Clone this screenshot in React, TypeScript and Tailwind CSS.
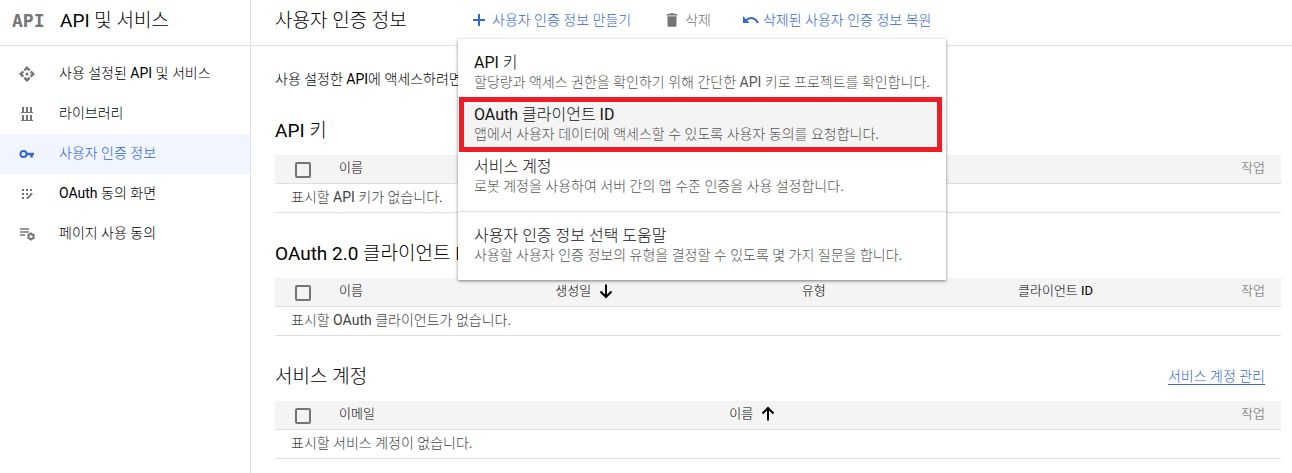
import { useState } from 'react';
import { MdDelete } from 'react-icons/md';
import clsx from 'clsx';

interface IconProps {
  className?: string;
}

function ApiIcon({ className }: IconProps) {
  return (
    <svg viewBox="0 0 16 16" className={className} fill="currentColor">
      <path d="M8 0l3.500 3.500-1.700 1.700L8 3.400 6.200 5.200 4.500 3.500z" />
      <path d="M8 16l3.500-3.500-1.700-1.700L8 12.600l-1.800-1.800-1.700 1.700z" />
      <path d="M0 8l3.500-3.500 1.700 1.700L3.400 8l1.800 1.800-1.700 1.700z" />
      <path d="M16 8l-3.500-3.500-1.700 1.700L12.600 8l-1.800 1.800 1.700 1.700z" />
      <circle cx="8" cy="8" r="1.500" />
    </svg>
  );
}

function LibraryIcon({ className }: IconProps) {
  return (
    <svg viewBox="0 0 16 16" className={className} fill="currentColor" shapeRendering="crispEdges">
      <path d="M3 1h2v5H3zM7 1h2v5H7zM11 1h2v5h-2zM2 6h12v1H2zM3 9h2v5H3zM7 9h2v5H7zM11 9h2v5h-2zM2 14h12v1H2z" />
    </svg>
  );
}

function KeyIcon({ className }: IconProps) {
  return (
    <svg viewBox="0 0 16 16" className={className} fill="none" stroke="currentColor">
      <circle cx="4.500" cy="8" r="3" strokeWidth="2" />
      <path d="M7.500 8H15" strokeWidth="2.500" />
      <path d="M12.500 8v3.500" strokeWidth="2.500" />
    </svg>
  );
}

function ConsentIcon({ className }: IconProps) {
  return (
    <svg viewBox="0 0 16 16" className={className} fill="currentColor">
      <path d="M3 3h2v2H3zM7 3h2v2H7zM11 3h2v2h-2zM3 7h2v2H3zM7 7h2v2H7zM3 11h2v2H3z" />
      <path d="M12.500 6.800l1.300 1.300L8.900 13H7.500v-1.300z" />
    </svg>
  );
}

function AgreementIcon({ className }: IconProps) {
  return (
    <svg viewBox="0 0 16 16" className={className} fill="none" stroke="currentColor">
      <path d="M1 3h9M1 6h9M1 9h5" strokeWidth="1.600" />
      <circle cx="12" cy="10.500" r="2.500" strokeWidth="1.800" />
      <path
        d="M12 6.500v1.500M12 13v1.500M8.500 8.500l1.300.8M14.200 11.700l1.300.8M8.500 12.500l1.300-.8M14.200 9.300l1.300-.8"
        strokeWidth="1.800"
      />
    </svg>
  );
}

function PlusIcon({ className }: IconProps) {
  return (
    <svg viewBox="0 0 18 18" className={className} fill="none" stroke="currentColor" strokeWidth="2">
      <path d="M9 3v12M3 9h12" />
    </svg>
  );
}

function RestoreIcon({ className }: IconProps) {
  return (
    <svg viewBox="0 0 16 16" className={className} fill="none" stroke="currentColor">
      <path d="M0 4v7h6.500z" fill="currentColor" stroke="none" />
      <path d="M3 8.500C7 4.500 12.500 5.500 14.800 11" strokeWidth="2" />
    </svg>
  );
}

function SortIcon({ className }: IconProps) {
  return (
    <svg viewBox="0 0 18 18" className={className} fill="none" stroke="currentColor" strokeWidth="2">
      <path d="M9 2.500v12M3.500 9.500L9 15l5.500-5.500" />
    </svg>
  );
}

const navItems = [
  { label: '사용 설정된 API 및 서비스', icon: ApiIcon },
  { label: '라이브러리', icon: LibraryIcon },
  { label: '사용자 인증 정보', icon: KeyIcon, active: true },
  { label: 'OAuth 동의 화면', icon: ConsentIcon },
  { label: '페이지 사용 동의', icon: AgreementIcon }
];

interface MenuEntry {
  title: string;
  description: string;
  highlighted?: boolean;
}

const credentialTypes: MenuEntry[] = [
  {
    title: 'API 키',
    description: '할당량과 액세스 권한을 확인하기 위해 간단한 API 키로 프로젝트를 확인합니다.'
  },
  {
    title: 'OAuth 클라이언트 ID',
    description: '앱에서 사용자 데이터에 액세스할 수 있도록 사용자 동의를 요청합니다.',
    highlighted: true
  },
  {
    title: '서비스 계정',
    description: '로봇 계정을 사용하여 서버 간의 앱 수준 인증을 사용 설정합니다.'
  }
];

const helpEntry: MenuEntry = {
  title: '사용자 인증 정보 선택 도움말',
  description: '사용할 사용자 인증 정보의 유형을 결정할 수 있도록 몇 가지 질문을 합니다.'
};

function MenuOption({ title, description, highlighted }: MenuEntry) {
  return (
    <button
      role="menuitem"
      className={clsx(
        'relative block w-full px-4 pt-1.5 pb-2 text-left whitespace-nowrap hover:bg-[#f4f4f4]',
        highlighted && 'z-10 bg-[#f4f4f4]'
      )}
    >
      <span className="block text-base leading-5 text-[#111]">{title}</span>
      <span className="block text-sm leading-[18px] text-[#555]">{description}</span>
      {highlighted && (
        <span className="pointer-events-none absolute -top-0.5 right-1 -bottom-px left-px border-5 border-[#ee1c25]" />
      )}
    </button>
  );
}

function CreateMenu() {
  return (
    <div
      role="menu"
      className="absolute top-[39px] left-0 z-20 w-[488px] bg-white shadow-[0_1px_3px_rgba(0,0,0,0.5)]"
    >
      <div className="border-b border-[#e0e0e0] py-2">
        {credentialTypes.map(entry => (
          <MenuOption key={entry.title} {...entry} />
        ))}
      </div>
      <div className="py-2">
        <MenuOption {...helpEntry} />
      </div>
    </div>
  );
}

interface Column {
  label: string;
  width?: string;
  sort?: 'asc' | 'desc';
}

interface CredentialSectionProps {
  title: string;
  columns: Column[];
  emptyText: string;
  link?: string;
}

function CredentialSection({ title, columns, emptyText, link }: CredentialSectionProps) {
  return (
    <section>
      <div className="flex h-[65px] items-center justify-between pt-[18px] pr-4">
        <h2 className="text-[19px]">{title}</h2>
        {link && (
          <a href="#" className="mb-0.5 border-b border-[#3367d6] text-sm leading-4 text-[#3367d6]">
            {link}
          </a>
        )}
      </div>
      <table className="w-full table-fixed border-separate border-spacing-0">
        <thead>
          <tr className="h-[29px] bg-[#f4f4f4] text-left text-[13px] leading-5">
            <th className="w-16 border-b border-[#e0e0e0] p-0 pt-0.5 pl-5">
              <input
                type="checkbox"
                aria-label={`${title} 모두 선택`}
                className="block size-4 appearance-none rounded-xs border-2 border-[#757575] checked:bg-[#757575]"
              />
            </th>
            {columns.map(({ label, width, sort }) => (
              <th key={label} className={clsx('border-b border-[#e0e0e0] p-0 pb-0.5 font-normal', width)}>
                <span className="flex items-center gap-1.5">
                  {label}
                  {sort && <SortIcon className={clsx('size-[18px]', sort === 'asc' && 'rotate-180')} />}
                </span>
              </th>
            ))}
            <th className="w-16 border-b border-[#e0e0e0] p-0 pr-4 pb-0.5 text-right font-normal text-[#616161]">
              작업
            </th>
          </tr>
        </thead>
        <tbody>
          <tr className="h-[29px]">
            <td
              colSpan={columns.length + 2}
              className="border-b border-[#e0e0e0] p-0 pb-0.5 pl-4 text-sm leading-5 text-[#424242]"
            >
              {emptyText}
            </td>
          </tr>
        </tbody>
      </table>
    </section>
  );
}

export default function App() {
  const [menuOpen, setMenuOpen] = useState(true);

  return (
    <div className="flex min-h-screen bg-white font-['Roboto','Noto_Sans_CJK_KR_Light','Noto_Sans_CJK_KR',sans-serif] text-black">
      <aside className="w-[251px] shrink-0 border-r border-[#e0e0e0]">
        <div className="flex h-[46px] items-center border-b border-[#e0e0e0] pb-[3px] pl-3">
          <span className="w-12 font-['DejaVu_Sans_Mono',monospace] text-lg font-bold text-[#757575]">API</span>
          <h2 className="text-[19px]">API 및 서비스</h2>
        </div>
        <nav className="pt-2">
          {navItems.map(({ label, icon: Icon, active }) => (
            <a
              key={label}
              href="#"
              className={clsx(
                'flex h-10 items-center gap-6 pl-[19px] text-sm',
                active && 'bg-[#f0f5ff] text-[#3367d6]'
              )}
            >
              <Icon className={clsx('size-4 shrink-0', !active && 'text-[#757575]')} />
              <span className="pb-0.5">{label}</span>
            </a>
          ))}
        </nav>
      </aside>

      <main className="min-w-0 flex-1">
        <header className="flex h-[46px] border-b border-[#e0e0e0] pl-6 text-sm whitespace-nowrap text-[#3367d6]">
          <h1 className="flex w-[183px] items-center pb-[3px] text-[19px] text-black">사용자 인증 정보</h1>
          <div className="relative">
            <button
              className="flex h-full items-center gap-1 pb-[5px] pl-3"
              aria-expanded={menuOpen}
              onClick={() => setMenuOpen(!menuOpen)}
            >
              <PlusIcon className="size-[18px]" />
              사용자 인증 정보 만들기
            </button>
            {menuOpen && <CreateMenu />}
          </div>
          <button className="ml-8 flex items-center gap-1 pb-[5px] text-[#757575]" disabled>
            <MdDelete className="size-[18px]" />
            삭제
          </button>
          <button className="ml-8 flex items-center gap-1 pb-[5px]">
            <RestoreIcon className="size-4" />
            삭제된 사용자 인증 정보 복원
          </button>
        </header>

        <div className="pr-[11px] pl-6">
          <p className="pt-[22px] text-sm leading-[22px]">사용 설정한 API에 액세스하려면</p>
          <CredentialSection title="API 키" columns={[{ label: '이름' }]} emptyText="표시할 API 키가 없습니다." />
          <CredentialSection
            title="OAuth 2.0 클라이언트 ID"
            columns={[
              { label: '이름', width: 'w-[21.5%]' },
              { label: '생성일', width: 'w-[24.5%]', sort: 'desc' },
              { label: '유형', width: 'w-[21.5%]' },
              { label: '클라이언트 ID' }
            ]}
            emptyText="표시할 OAuth 클라이언트가 없습니다."
          />
          <CredentialSection
            title="서비스 계정"
            columns={[
              { label: '이메일', width: 'w-[38.8%]' },
              { label: '이름', sort: 'asc' }
            ]}
            emptyText="표시할 서비스 계정이 없습니다."
            link="서비스 계정 관리"
          />
        </div>
      </main>
    </div>
  );
}
